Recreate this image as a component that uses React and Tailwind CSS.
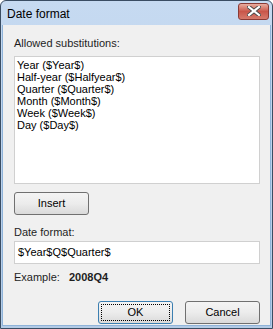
import React from 'react'

const items = [
  'Year ($Year$)',
  'Half-year ($Halfyear$)',
  'Quarter ($Quarter$)',
  'Month ($Month$)',
  'Week ($Week$)',
  'Day ($Day$)',
]

function Button({ children, focused }) {
  return (
    <div
      className={`relative w-[75px] h-[23px] rounded-[3px] border ${focused ? 'border-[#3c7fb1]' : 'border-[#707070]'} bg-gradient-to-b from-[#f4f4f4] via-[#ececec] to-[#dadada] flex items-center justify-center text-[11px] text-black`}
    >
      {focused && (
        <div className="absolute inset-[2px] border border-dotted border-black rounded-[1px]" />
      )}
      <span className="relative">{children}</span>
    </div>
  )
}

export default function App() {
  return (
    <div
      className="w-[273px] h-[329px] flex flex-col border border-[#3a4d63] rounded-t-[6px] bg-gradient-to-b from-[#c6daf1] to-[#b3cbe6] overflow-hidden"
      style={{ fontFamily: '"Liberation Sans", Arial, sans-serif' }}
    >
      {/* Title bar */}
      <div className="h-[24px] flex items-center justify-between pl-[6px] pr-[3px] shrink-0">
        <span className="text-[12px] text-black mt-[1px]">Date format</span>
        <div className="w-[31px] h-[17px] mt-[-4px] rounded-[3px] border border-[#8a3a35] bg-gradient-to-b from-[#e8ada0] via-[#c9564a] to-[#d57a6c] flex items-center justify-center">
          <svg width="14" height="10" viewBox="0 0 14 10">
            <path d="M2 1 L12 9 M12 1 L2 9" stroke="#4a4a4a" strokeWidth="4" strokeLinecap="square" />
            <path d="M2 1 L12 9 M12 1 L2 9" stroke="#ffffff" strokeWidth="2.2" strokeLinecap="square" />
          </svg>
        </div>
      </div>

      {/* Client area */}
      <div className="flex-1 mx-[1px] mb-[2px] bg-[#f0f0f0] border-l border-r border-b border-[#8fb3d9] flex flex-col pl-[11px] text-[11px] text-[#1e1e1e]">
        <div className="mt-[12px] h-[13px] leading-[13px]">Allowed substitutions:</div>
        <div className="mt-[6px] w-[246px] h-[128px] border border-[#d0d0d0] bg-white pl-[2px] pt-[2px]">
          {items.map(t => (
            <div key={t} className="h-[12px] leading-[12px] text-black">{t}</div>
          ))}
        </div>
        <div className="mt-[8px]">
          <Button>Insert</Button>
        </div>
        <div className="mt-[11px] h-[13px] leading-[13px]">Date format:</div>
        <div className="mt-[2px] w-[246px] h-[23px] border border-[#d0d0d0] bg-white flex items-center pl-[3px] text-black">
          $Year$Q$Quarter$
        </div>
        <div className="mt-[7px] h-[13px] leading-[13px] flex">
          <span className="w-[55px]">Example:</span>
          <span className="font-bold">2008Q4</span>
        </div>
        <div className="mt-[17px] w-[246px] flex justify-end gap-[12px]">
          <Button focused>OK</Button>
          <Button>Cancel</Button>
        </div>
      </div>
    </div>
  )
}
